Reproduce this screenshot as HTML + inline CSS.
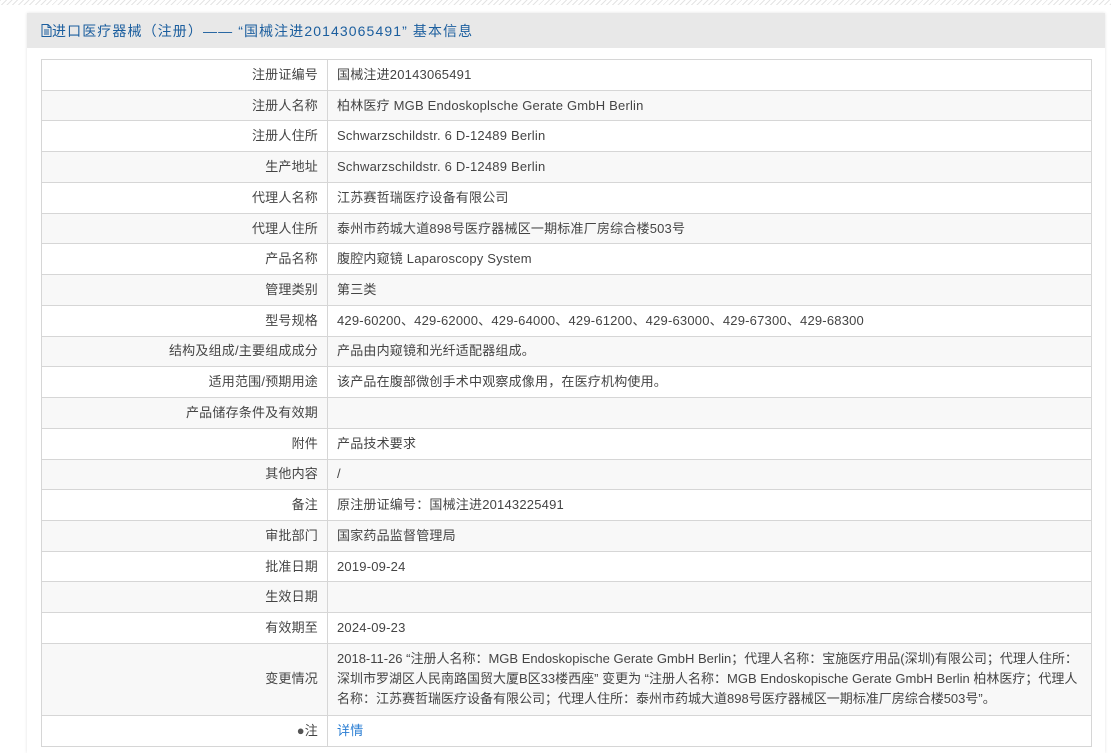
<!DOCTYPE html>
<html><head><meta charset="utf-8"><style>
body{margin:0;width:1111px;height:740px;overflow:hidden;background:#fff;font-family:"Liberation Sans","Noto Sans CJK SC",sans-serif;}
.top{position:absolute;left:0;top:0;width:1111px;height:5px;background:repeating-linear-gradient(135deg,#e4e4e4 0 1px,#fff 1px 4px);}
.panel{position:absolute;left:27px;top:13px;width:1078px;height:740px;background:#fff;box-shadow:0 0 3px rgba(0,0,0,.12);}
.hd{height:35px;background:#e8e8e8;color:#1b5e9e;font-size:14px;line-height:36px;padding-left:14px;letter-spacing:1.1px;}
table{position:absolute;left:14px;top:46px;width:1051px;border-collapse:collapse;font-size:13px;color:#444;letter-spacing:0.2px;}
td{border:1px solid #d6d6d6;height:29.74px;padding:0 9px;line-height:20px;}
td.l{width:267px;text-align:right;}
tr:nth-child(even) td{background:#f8f8f8;}
td.m{padding-top:5px;padding-bottom:6px;height:auto;letter-spacing:0;}
a{color:#2a7ed3;text-decoration:none;}
</style></head><body>
<div class="top"></div>
<div class="panel">
<div class="hd"><svg width="11" height="13" viewBox="0 0 11 13" style="vertical-align:-1px"><path d="M1 .5h6l3 3v9H1z M7 .5v3h3 M3 6h5M3 8h5M3 10h5" fill="none" stroke="#1b5e9e"/></svg>进口医疗器械（注册）—— “国械注进20143065491” 基本信息</div>
<table>
<tr><td class="l">注册证编号</td><td>国械注进20143065491</td></tr>
<tr><td class="l">注册人名称</td><td>柏林医疗 MGB Endoskoplsche Gerate GmbH Berlin</td></tr>
<tr><td class="l">注册人住所</td><td>Schwarzschildstr. 6 D-12489 Berlin</td></tr>
<tr><td class="l">生产地址</td><td>Schwarzschildstr. 6 D-12489 Berlin</td></tr>
<tr><td class="l">代理人名称</td><td>江苏赛哲瑞医疗设备有限公司</td></tr>
<tr><td class="l">代理人住所</td><td>泰州市药城大道898号医疗器械区一期标准厂房综合楼503号</td></tr>
<tr><td class="l">产品名称</td><td>腹腔内窥镜 Laparoscopy System</td></tr>
<tr><td class="l">管理类别</td><td>第三类</td></tr>
<tr><td class="l">型号规格</td><td>429-60200、429-62000、429-64000、429-61200、429-63000、429-67300、429-68300</td></tr>
<tr><td class="l">结构及组成/主要组成成分</td><td>产品由内窥镜和光纤适配器组成。</td></tr>
<tr><td class="l">适用范围/预期用途</td><td>该产品在腹部微创手术中观察成像用，在医疗机构使用。</td></tr>
<tr><td class="l">产品储存条件及有效期</td><td></td></tr>
<tr><td class="l">附件</td><td>产品技术要求</td></tr>
<tr><td class="l">其他内容</td><td>/</td></tr>
<tr><td class="l">备注</td><td>原注册证编号：国械注进20143225491</td></tr>
<tr><td class="l">审批部门</td><td>国家药品监督管理局</td></tr>
<tr><td class="l">批准日期</td><td>2019-09-24</td></tr>
<tr><td class="l">生效日期</td><td></td></tr>
<tr><td class="l">有效期至</td><td>2024-09-23</td></tr>
<tr><td class="l">变更情况</td><td class="m">2018-11-26 “注册人名称：MGB Endoskopische Gerate GmbH Berlin；代理人名称：宝施医疗用品(深圳)有限公司；代理人住所：深圳市罗湖区人民南路国贸大厦B区33楼西座” 变更为 “注册人名称：MGB Endoskopische Gerate GmbH Berlin 柏林医疗；代理人名称：江苏赛哲瑞医疗设备有限公司；代理人住所：泰州市药城大道898号医疗器械区一期标准厂房综合楼503号”。</td></tr>
<tr><td class="l"><span style="color:#555">●</span>注</td><td><a>详情</a></td></tr>
</table>
</div>
</body></html>
